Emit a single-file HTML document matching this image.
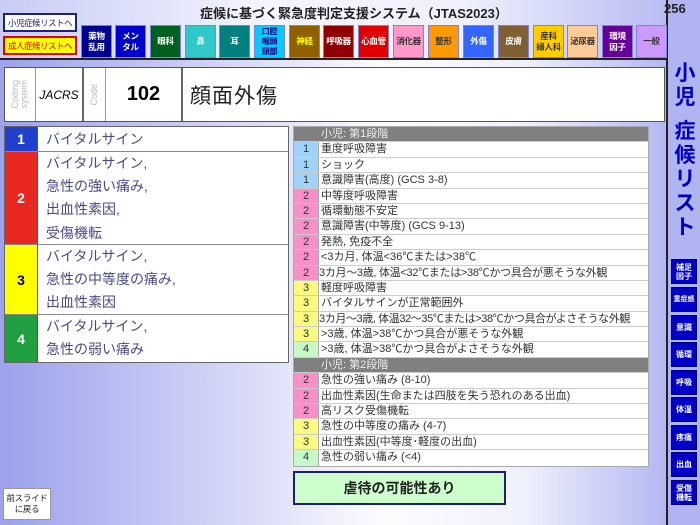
<!DOCTYPE html>
<html><head><meta charset="utf-8"><style>
*{margin:0;padding:0;box-sizing:border-box}
body{width:700px;height:525px;position:relative;overflow:hidden;font-family:"Liberation Sans","Noto Sans CJK JP",sans-serif;background:linear-gradient(90deg,#9ca2ec 0%,#cfd2f6 30%,#fdfdff 55%,#eef0fc 75%,#b4b8f2 95%)}
.abs{position:absolute}
.top{left:0;top:0;width:668px;height:59px;background:linear-gradient(90deg,#c8ccf4 0%,#f4f5fe 40%,#eef0fc 70%,#b8bcf2 100%)}
.hline{left:0;top:58px;width:668px;height:2px;background:#222}
.vline{left:666px;top:0;width:2px;height:525px;background:#222}
.side{left:668px;top:0;width:32px;height:525px;background:#b0b4f0}
.title{left:200px;top:3px;font-size:13px;font-weight:bold;color:#222;white-space:nowrap}
.num{left:664px;top:1px;font-size:13px;font-weight:bold;color:#222}
.cat{top:25px;width:31px;height:33px;font-size:8.5px;line-height:10.5px;display:flex;align-items:center;justify-content:center;text-align:center;border:1px solid #8080e0;font-weight:bold;white-space:nowrap;letter-spacing:-0.3px}
.lb{left:3px;width:74px;height:19px;font-size:8.5px;letter-spacing:-0.5px;white-space:nowrap;display:flex;align-items:center;justify-content:center}
.code{left:4px;top:67px;width:661px;height:55px;background:#fff;border:1px solid #555}
.code div{position:absolute;top:0;height:53px;border-right:1px solid #999;display:flex;align-items:center;justify-content:center}
.vt{writing-mode:vertical-rl;transform:rotate(180deg);color:#bbb;font-size:9px;line-height:9px}
.lt{left:4px;top:126px;width:285px;background:#fff;border:1px solid #666}
.lrow{position:absolute;left:0;width:283px;border-bottom:1px solid #888}
.lrow .n{position:absolute;left:0;top:0;bottom:0;width:33px;border-right:1px solid #555;display:flex;align-items:center;justify-content:center;font-weight:bold;font-size:14px}
.lrow .t{position:absolute;left:41px;top:0;color:#4a4a8a;font-size:14px;line-height:23.2px}
.rt{left:293px;top:126px;width:356px;background:#fff;border:1px solid #aaa}
.rr{height:15.4px;display:flex;border-bottom:1px solid #ccc;font-size:11px;color:#333;line-height:14px}
.rr .k{width:25px;flex:none;text-align:center;border-right:1px solid #aaa}
.rr .v{padding-left:2px;white-space:nowrap}
.hd{background:#808080;color:#eee}
.hd .k{border-right:none}
.c1 .k{background:#9fd3f7}.c2 .k{background:#f890c8}.c3 .k{background:#fafa80}.c4 .k{background:#c8f8c8}
.sb{left:671px;width:26px;height:25px;background:#0000c8;border:1px solid #000080;color:#fff;font-size:8px;line-height:9px;font-weight:bold;display:flex;align-items:center;justify-content:center;text-align:center}
</style></head><body>
<div class="abs top"></div>
<div class="abs side"></div>
<div class="abs hline"></div>
<div class="abs vline"></div>
<div class="abs title">症候に基づく緊急度判定支援システム（JTAS2023）</div>
<div class="abs num" style="left:664px;z-index:2">256</div>
<div class="abs lb" style="top:13px;background:#fff;border:2px solid #202080;color:#202080">小児症候リストへ</div>
<div class="abs lb" style="top:36px;background:#ffff00;border:2px solid #e00000;color:#e00000">成人症候リストへ</div>
<div class="abs cat" style="left:81px;background:#000090;color:#fff">薬物<br>乱用</div>
<div class="abs cat" style="left:115px;background:#0000cc;color:#fff">メン<br>タル</div>
<div class="abs cat" style="left:150px;background:#006020;color:#fff">眼科</div>
<div class="abs cat" style="left:185px;background:#30c8c8;color:#fff">鼻</div>
<div class="abs cat" style="left:219px;background:#008080;color:#fff">耳</div>
<div class="abs cat" style="left:254px;background:#00ccff;color:#000080;font-size:8px;line-height:10px">口腔<br>咽頭<br>頸部</div>
<div class="abs cat" style="left:289px;background:#906000;color:#ffff00">神経</div>
<div class="abs cat" style="left:323px;background:#900000;color:#fff">呼吸器</div>
<div class="abs cat" style="left:358px;background:#e00000;color:#fff">心血管</div>
<div class="abs cat" style="left:393px;background:#ff99cc;color:#333">消化器</div>
<div class="abs cat" style="left:428px;background:#ff9900;color:#333">整形</div>
<div class="abs cat" style="left:463px;background:#3366ff;color:#fff">外傷</div>
<div class="abs cat" style="left:498px;background:#806030;color:#fff">皮膚</div>
<div class="abs cat" style="left:533px;background:#ffcc00;color:#333">産科<br>婦人科</div>
<div class="abs cat" style="left:567px;background:#ffcc99;color:#333">泌尿器</div>
<div class="abs cat" style="left:602px;background:#660099;color:#fff">環境<br>因子</div>
<div class="abs cat" style="left:636px;background:#cc99ff;color:#333">一般</div>

<div class="abs code">
<div style="left:0;width:31px"><span class="vt">Coding<br>system</span></div>
<div style="left:31px;width:48px;font-style:italic;font-size:12px;border-right:2px solid #666">JACRS</div>
<div style="left:79px;width:22px"><span class="vt">Code</span></div>
<div style="left:101px;width:77px;font-size:20px;font-weight:bold;border-right:2px solid #666">102</div>
<div style="left:185px;border:none;font-size:21px;letter-spacing:1px;color:#222">顔面外傷</div>
</div>

<div class="abs lt" style="height:237px">
<div class="lrow" style="top:0;height:25px"><div class="n" style="background:#2040d0;color:#fff">1</div><div class="t" style="line-height:25px">バイタルサイン</div></div>
<div class="lrow" style="top:25px;height:93px"><div class="n" style="background:#e82820;color:#fff">2</div><div class="t">バイタルサイン,<br>急性の強い痛み,<br>出血性素因,<br>受傷機転</div></div>
<div class="lrow" style="top:118px;height:70px"><div class="n" style="background:#ffff00;color:#000">3</div><div class="t">バイタルサイン,<br>急性の中等度の痛み,<br>出血性素因</div></div>
<div class="lrow" style="top:188px;height:47px;border-bottom:none"><div class="n" style="background:#20a040;color:#fff">4</div><div class="t">バイタルサイン,<br>急性の弱い痛み</div></div>
</div>

<div class="abs rt">
<div class="rr hd"><div class="k"></div><div class="v">小児: 第1段階</div></div>
<div class="rr c1"><div class="k">1</div><div class="v">重度呼吸障害</div></div>
<div class="rr c1"><div class="k">1</div><div class="v">ショック</div></div>
<div class="rr c1"><div class="k">1</div><div class="v">意識障害(高度) (GCS 3-8)</div></div>
<div class="rr c2"><div class="k">2</div><div class="v">中等度呼吸障害</div></div>
<div class="rr c2"><div class="k">2</div><div class="v">循環動態不安定</div></div>
<div class="rr c2"><div class="k">2</div><div class="v">意識障害(中等度) (GCS 9-13)</div></div>
<div class="rr c2"><div class="k">2</div><div class="v">発熱, 免疫不全</div></div>
<div class="rr c2"><div class="k">2</div><div class="v">&lt;3カ月, 体温&lt;36℃または&gt;38℃</div></div>
<div class="rr c2"><div class="k">2</div><div class="v" style="padding-left:0;letter-spacing:-0.3px">3カ月～3歳, 体温&lt;32℃または&gt;38℃かつ具合が悪そうな外観</div></div>
<div class="rr c3"><div class="k">3</div><div class="v">軽度呼吸障害</div></div>
<div class="rr c3"><div class="k">3</div><div class="v">バイタルサインが正常範囲外</div></div>
<div class="rr c3"><div class="k">3</div><div class="v" style="padding-left:0;letter-spacing:-0.4px">3カ月～3歳, 体温32～35℃または&gt;38℃かつ具合がよさそうな外観</div></div>
<div class="rr c3"><div class="k">3</div><div class="v">&gt;3歳, 体温&gt;38℃かつ具合が悪そうな外観</div></div>
<div class="rr c4"><div class="k">4</div><div class="v">&gt;3歳, 体温&gt;38℃かつ具合がよさそうな外観</div></div>
<div class="rr hd"><div class="k"></div><div class="v">小児: 第2段階</div></div>
<div class="rr c2"><div class="k">2</div><div class="v">急性の強い痛み (8-10)</div></div>
<div class="rr c2"><div class="k">2</div><div class="v">出血性素因(生命または四肢を失う恐れのある出血)</div></div>
<div class="rr c2"><div class="k">2</div><div class="v">高リスク受傷機転</div></div>
<div class="rr c3"><div class="k">3</div><div class="v">急性の中等度の痛み (4-7)</div></div>
<div class="rr c3"><div class="k">3</div><div class="v">出血性素因(中等度･軽度の出血)</div></div>
<div class="rr c4" style="border-bottom:none"><div class="k">4</div><div class="v">急性の弱い痛み (&lt;4)</div></div>
</div>

<div class="abs" style="left:293px;top:471px;width:213px;height:34px;background:#ccffcc;border:2px solid #202070;display:flex;align-items:center;justify-content:center;font-size:14px;font-weight:bold;color:#222">虐待の可能性あり</div>
<div class="abs" style="left:3px;top:488px;width:48px;height:32px;background:#fff;border:1px solid #999;font-size:8.5px;line-height:11px;text-align:center;padding-top:4px;color:#222;white-space:nowrap;letter-spacing:-0.3px">前スライド<br>に戻る</div>

<div class="abs" style="left:671px;top:62px;width:28px;font-size:21px;line-height:24px;font-weight:bold;color:#0000c0;text-align:center">小<br>児</div>
<div class="abs" style="left:671px;top:120px;width:28px;font-size:21px;line-height:24px;font-weight:bold;color:#0000c0;text-align:center">症<br>候<br>リ<br>ス<br>ト</div>
<div class="abs sb" style="top:259px">補足<br>因子</div>
<div class="abs sb" style="top:287px;font-size:7px">重症感</div>
<div class="abs sb" style="top:315px">意識</div>
<div class="abs sb" style="top:342px">循環</div>
<div class="abs sb" style="top:370px">呼吸</div>
<div class="abs sb" style="top:397px">体温</div>
<div class="abs sb" style="top:425px">疼痛</div>
<div class="abs sb" style="top:452px">出血</div>
<div class="abs sb" style="top:480px">受傷<br>機転</div>
</body></html>
